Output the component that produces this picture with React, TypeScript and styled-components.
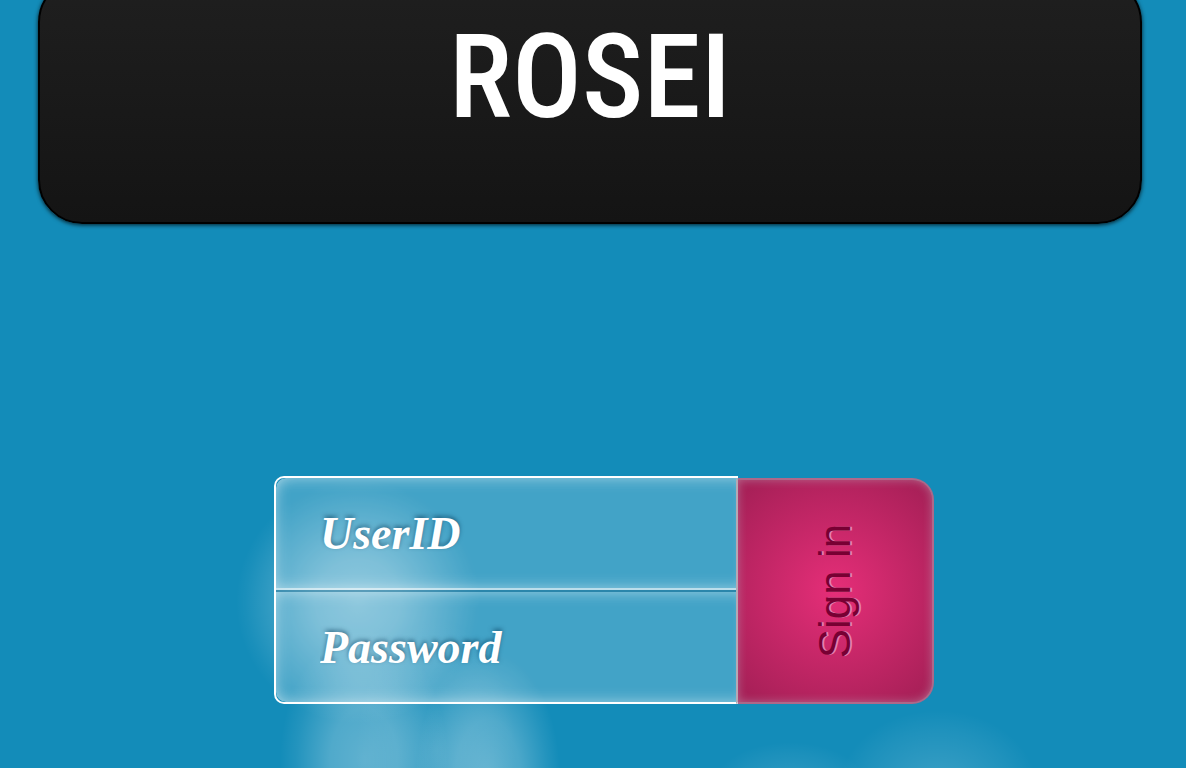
import React from "react";
import styled, { createGlobalStyle } from "styled-components";

const GlobalStyle = createGlobalStyle`
  * { box-sizing: border-box; }
  html, body, #root { height: 100%; }
  body {
    margin: 0;
    overflow: hidden;
    background: #138cb9;
    font-family: "Liberation Sans", Arial, sans-serif;
  }
`;

const Page = styled.div`
  display: flex;
  flex-direction: column;
  min-height: 100%;
  background:
    radial-gradient(circle 122px at 358px 602px, rgba(255, 255, 255, 0.4) 0, rgba(255, 255, 255, 0.32) 35%, rgba(255, 255, 255, 0.14) 70%, rgba(255, 255, 255, 0.03) 92%, transparent 100%),
    radial-gradient(ellipse 84px 130px at 364px 760px, rgba(255, 255, 255, 0.32) 0, rgba(255, 255, 255, 0.26) 40%, rgba(255, 255, 255, 0.07) 80%, transparent 100%),
    radial-gradient(ellipse 72px 126px at 488px 776px, rgba(255, 255, 255, 0.32) 0, rgba(255, 255, 255, 0.24) 45%, rgba(255, 255, 255, 0.07) 82%, transparent 100%),
    radial-gradient(ellipse 80px 130px at 436px 750px, rgba(255, 255, 255, 0.15) 0, transparent 100%),
    radial-gradient(ellipse 100px 80px at 938px 790px, rgba(255, 255, 255, 0.18) 0, rgba(255, 255, 255, 0.05) 75%, transparent 100%),
    radial-gradient(ellipse 80px 48px at 790px 790px, rgba(255, 255, 255, 0.14) 0, rgba(255, 255, 255, 0.04) 75%, transparent 100%),
    #138cb9;
`;

const Banner = styled.header`
  display: flex;
  justify-content: center;
  height: 246px;
  margin: -22px 44px 0 38px;
  padding-top: 32px;
  border: 2px solid #000;
  border-radius: 44px;
  background: linear-gradient(#1f1f1f, #141414);
  box-shadow: 0 1px 4px rgba(0, 0, 0, 0.8);
`;

const Brand = styled.h1`
  margin: 0;
  color: #fff;
  font: 500 116px/130px "Roboto Condensed", Roboto, sans-serif;
`;

const Main = styled.main`
  display: flex;
  justify-content: center;
  padding: 252px 0 0 22px;
`;

const LoginForm = styled.form`
  display: flex;
  width: 660px;
`;

const Fields = styled.div`
  display: flex;
  flex: 1;
  flex-direction: column;
  border: 2px solid #fff;
  border-right: 0;
  border-radius: 10px 0 0 10px;
`;

const Field = styled.input<{ $first?: boolean }>`
  width: 100%;
  height: 112px;
  padding: 0 44px;
  border: 0 solid;
  border-width: ${(p) => (p.$first ? "0 0 2px" : "2px 0 0")};
  border-color: ${(p) => (p.$first ? "rgba(255, 255, 255, 0.65)" : "rgba(0, 80, 120, 0.35)")};
  border-radius: ${(p) => (p.$first ? "10px 0 0 0" : "0 0 0 10px")};
  outline: 0;
  background: rgba(255, 255, 255, 0.2);
  box-shadow:
    inset 0 10px 14px -8px rgba(255, 255, 255, 0.35),
    inset 0 -10px 14px -8px rgba(255, 255, 255, 0.35),
    inset 10px 0 14px -8px rgba(255, 255, 255, 0.3);
  color: #fff;
  font: italic bold 46px/54px "Monotype Corsiva", "URW Chancery L", Z003, "Liberation Serif", serif;
  text-shadow: 0 -2px 4px rgba(0, 50, 80, 0.55);

  &::placeholder {
    color: #fff;
    opacity: 1;
  }
`;

const SignIn = styled.button`
  display: flex;
  align-items: center;
  justify-content: center;
  width: 198px;
  margin: 2px 0 0 -2px;
  padding: 0;
  border: 2px solid rgba(176, 176, 186, 0.5);
  border-left-color: #b5a9b4;
  border-radius: 0 22px 22px 0;
  background: radial-gradient(circle, #e52e78 0, #a82058 134px) border-box;
  box-shadow: inset 0 0 10px rgba(190, 190, 200, 0.45);
  color: #780033;
  font: 44px/52px "Liberation Sans", Arial, sans-serif;
  cursor: pointer;
`;

const VerticalLabel = styled.span`
  white-space: nowrap;
  transform: rotate(-90deg);
  text-shadow: 0 2px 0 #e87fae;
`;

export default function App() {
  return (
    <>
      <GlobalStyle />
      <Page>
        <Banner>
          <Brand>ROSEI</Brand>
        </Banner>
        <Main>
          <LoginForm onSubmit={(e: React.FormEvent) => e.preventDefault()}>
            <Fields>
              <Field $first type="text" name="user" aria-label="UserID" placeholder="UserID" />
              <Field type="password" name="password" aria-label="Password" placeholder="Password" />
            </Fields>
            <SignIn type="submit">
              <VerticalLabel>Sign in</VerticalLabel>
            </SignIn>
          </LoginForm>
        </Main>
      </Page>
    </>
  );
}
